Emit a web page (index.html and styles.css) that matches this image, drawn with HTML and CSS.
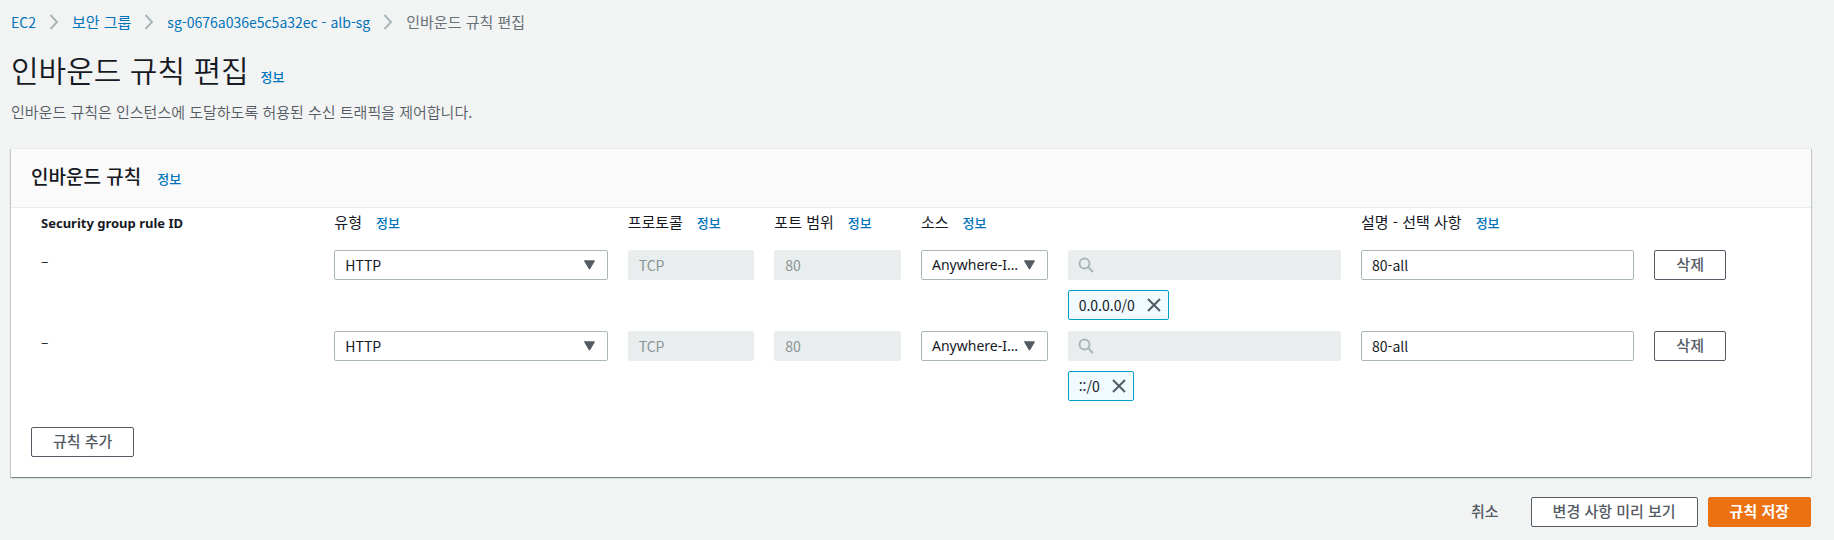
FILE: index.html
```html
<!DOCTYPE html>
<html lang="ko">
<head>
<meta charset="utf-8">
<meta name="viewport" content="width=device-width, initial-scale=1">
<title>인바운드 규칙 편집</title>
<link rel="stylesheet" href="styles.css">
</head>
<body>
<svg class="sprite" aria-hidden="true">
  <symbol id="chevron" viewBox="0 0 10 16"><path d="M1.500 1 8 8l-6.500 7" fill="none" stroke="currentColor" stroke-width="2"/></symbol>
  <symbol id="caret" viewBox="0 0 10 9"><path d="M.8.8h8.400L5 7.800z" fill="currentColor" stroke="currentColor" stroke-width="1.400" stroke-linejoin="round"/></symbol>
  <symbol id="search" viewBox="0 0 16 16"><circle cx="6.500" cy="6.500" r="5" fill="none" stroke="currentColor" stroke-width="2"/><path d="m10 10 5 5" fill="none" stroke="currentColor" stroke-width="2"/></symbol>
  <symbol id="close" viewBox="0 0 14 14"><path d="m1 1 12 12M13 1 1 13" fill="none" stroke="currentColor" stroke-width="2"/></symbol>
</svg>

<nav class="breadcrumb" aria-label="탐색 경로">
  <a class="latin" href="#">EC2</a>
  <svg class="chevron"><use href="#chevron"/></svg>
  <a href="#">보안 그룹</a>
  <svg class="chevron"><use href="#chevron"/></svg>
  <a class="latin" href="#">sg-0676a036e5c5a32ec - alb-sg</a>
  <svg class="chevron"><use href="#chevron"/></svg>
  <span>인바운드 규칙 편집</span>
</nav>

<header class="page-header">
  <div class="title-row">
    <h1>인바운드 규칙 편집</h1>
    <a class="info" href="#">정보</a>
  </div>
  <p>인바운드 규칙은 인스턴스에 도달하도록 허용된 수신 트래픽을 제어합니다.</p>
</header>

<form>
  <section class="card">
    <div class="card-header">
      <h2>인바운드 규칙</h2>
      <a class="info" href="#">정보</a>
    </div>
    <div class="card-body">
      <div class="rule-grid labels">
        <div class="wide"><b>Security group rule ID</b></div>
        <div class="wide"><span id="l-type">유형</span><a class="info" href="#">정보</a></div>
        <div><span id="l-protocol">프로토콜</span><a class="info" href="#">정보</a></div>
        <div><span id="l-port">포트 범위</span><a class="info" href="#">정보</a></div>
        <div><span id="l-source">소스</span><a class="info" href="#">정보</a></div>
        <div class="wide"></div>
        <div class="wide"><span id="l-desc">설명 - 선택 사항</span><a class="info" href="#">정보</a></div>
      </div>

      <div class="rule-grid rule">
        <div class="wide rule-id">–</div>
        <div class="wide"><div class="select"><select aria-labelledby="l-type"><option>HTTP</option></select><svg class="caret"><use href="#caret"/></svg></div></div>
        <div><input class="field" type="text" value="TCP" aria-labelledby="l-protocol" disabled></div>
        <div><input class="field" type="text" value="80" aria-labelledby="l-port" disabled></div>
        <div><div class="select compact"><select aria-labelledby="l-source"><option>Anywhere-IPv4</option></select><svg class="caret"><use href="#caret"/></svg></div></div>
        <div class="wide">
          <div class="search"><input class="field" type="search" aria-label="소스 검색" disabled><svg class="search-icon"><use href="#search"/></svg></div>
          <div class="token"><span>0.0.0.0/0</span><button type="button" aria-label="0.0.0.0/0 제거"><svg><use href="#close"/></svg></button></div>
        </div>
        <div class="wide"><input class="field" type="text" value="80-all" aria-labelledby="l-desc"></div>
        <div><button class="btn" type="button">삭제</button></div>
      </div>

      <div class="rule-grid rule">
        <div class="wide rule-id">–</div>
        <div class="wide"><div class="select"><select aria-labelledby="l-type"><option>HTTP</option></select><svg class="caret"><use href="#caret"/></svg></div></div>
        <div><input class="field" type="text" value="TCP" aria-labelledby="l-protocol" disabled></div>
        <div><input class="field" type="text" value="80" aria-labelledby="l-port" disabled></div>
        <div><div class="select compact"><select aria-labelledby="l-source"><option>Anywhere-IPv6</option></select><svg class="caret"><use href="#caret"/></svg></div></div>
        <div class="wide">
          <div class="search"><input class="field" type="search" aria-label="소스 검색" disabled><svg class="search-icon"><use href="#search"/></svg></div>
          <div class="token"><span>::/0</span><button type="button" aria-label="::/0 제거"><svg><use href="#close"/></svg></button></div>
        </div>
        <div class="wide"><input class="field" type="text" value="80-all" aria-labelledby="l-desc"></div>
        <div><button class="btn" type="button">삭제</button></div>
      </div>

      <button class="btn add" type="button">규칙 추가</button>
    </div>
  </section>

  <div class="actions">
    <button class="btn link" type="button">취소</button>
    <button class="btn" type="button">변경 사항 미리 보기</button>
    <button class="btn primary" type="submit">규칙 저장</button>
  </div>
</form>
</body>
</html>
```
FILE: styles.css
```css
* { box-sizing: border-box; }

body {
  margin: 0;
  padding: 11px 23px 12px 11px;
  background: #f2f3f3;
  color: #16191f;
  font: 15px/22px "Noto Sans CJK KR", "Noto Sans", sans-serif;
}

.sprite { display: none; }

a { color: #0073bb; text-decoration: none; }

.info { font-size: 13px; font-weight: 500; }

.breadcrumb {
  display: flex;
  align-items: center;
  gap: 13px;
  color: #687078;
}

.latin { font-size: 14px; }

.chevron { width: 10px; height: 16px; color: #aab7b8; }

.page-header { padding: 16px 0 25px; }

.title-row { display: flex; align-items: baseline; gap: 12px; }

h1 { margin: 0; font-size: 30px; font-weight: 350; line-height: 40px; }

.page-header p { margin: 12px 0 0; color: #545b64; font-weight: 350; }

.card {
  background: #fff;
  border-top: 1px solid #eaeded;
  box-shadow: 0 1px 1px rgba(0, 28, 36, .3), 1px 1px 1px rgba(0, 28, 36, .15), -1px 1px 1px rgba(0, 28, 36, .15);
}

.card-header {
  display: flex;
  align-items: baseline;
  gap: 16px;
  padding: 13px 20px 17px;
  border-bottom: 1px solid #eaeded;
  background: #fafafa;
}

h2 { margin: 0; font-size: 19px; font-weight: 500; line-height: 28px; }

.card-body { padding: 0 20px 20px; }

.rule-grid {
  display: grid;
  grid-template-columns: repeat(12, minmax(0, 1fr));
}

.rule-grid > div { padding: 0 10px; }

.rule-grid > .wide { grid-column: span 2; }

.labels { padding: 3px 0 16px; white-space: nowrap; }

.labels .info { margin-left: 14px; }

.labels b { font-family: "Noto Sans", sans-serif; font-size: 13px; }

.rule { padding-bottom: 11px; }

.rule > .rule-id { font-size: 14px; line-height: 20px; }

.field,
.select select {
  display: block;
  width: 100%;
  height: 30px;
  padding: 0 10px;
  border: 1px solid #aab7b8;
  border-radius: 2px;
  background: #fff;
  color: #16191f;
  font: inherit;
  font-size: 14px;
  appearance: none;
}

.field:disabled { border-color: #eaeded; background: #eaeded; color: #879596; }

.select,
.search { position: relative; }

.select select { padding-right: 25px; text-overflow: ellipsis; }

.compact select { font-family: "Noto Sans", sans-serif; }

.caret {
  position: absolute;
  top: 10px;
  right: 13px;
  width: 11px;
  height: 10px;
  color: #545b64;
  pointer-events: none;
}

.search-icon {
  position: absolute;
  top: 7px;
  left: 10px;
  width: 16px;
  height: 16px;
  color: #aab7b8;
}

.token {
  display: inline-flex;
  align-items: center;
  gap: 12px;
  height: 30px;
  margin-top: 10px;
  padding: 0 7px 0 10px;
  border: 1px solid #00a1c9;
  border-radius: 2px;
  background: #f1faff;
  font-size: 14px;
  vertical-align: top;
}

.token button {
  display: flex;
  padding: 0;
  border: 0;
  background: none;
  color: #545b64;
}

.token svg { width: 14px; height: 14px; }

.btn {
  height: 30px;
  padding: 0 21px 2px;
  border: 1px solid #545b64;
  border-radius: 2px;
  background: #fff;
  color: #545b64;
  font: inherit;
  font-weight: 500;
  white-space: nowrap;
}

.add { display: block; margin-top: 15px; }

.actions {
  display: flex;
  justify-content: flex-end;
  gap: 10px;
  padding-top: 20px;
}

.link { border-color: transparent; background: transparent; }

.primary { border-color: #ec7211; background: #ec7211; color: #fff; font-weight: 700; }
```
